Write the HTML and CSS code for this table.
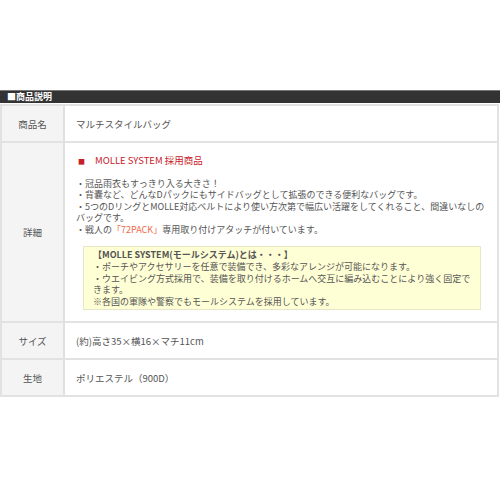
FILE: index.html
```html
<!DOCTYPE html>
<html>

<head>
	<meta charset="utf-8">
	<title>商品説明</title>
	<link rel="stylesheet" href="styles.css">
</head>

<body>
	<div id="item_spec">
		<h2 class="spec_title">■商品説明</h2>

		<table class="spec_table">
			<tr class="row_short">
				<th>商品名</th>
				<td>マルチスタイルバッグ</td>
			</tr>
			<tr>
				<th>詳細</th>
				<td class="detail">
					<p class="point"><span class="mark">■</span>MOLLE SYSTEM 採用商品</p>
					<p class="bullets">
						・冠品雨衣もすっきり入る大きさ！<br>
						・背嚢など、どんなDパックにもサイドバッグとして拡張のできる便利なバッグです。<br>
						・5つのDリングとMOLLE対応ベルトにより使い方次第で幅広い活躍をしてくれること、間違いなしのバッグです。<br>
						・戦人の<span class="accent">「72PACK」</span>専用取り付けアタッチが付いています。
					</p>
					<div class="note">
						<p class="note_title">【MOLLE SYSTEM(モールシステム)とは・・・】</p>
						<p>
							・ポーチやアクセサリーを任意で装備でき、多彩なアレンジが可能になります。<br>
							・ウエイビング方式採用で、装備を取り付けるホームへ交互に編み込むことにより強く固定できます。<br>
							※各国の軍隊や警察でもモールシステムを採用しています。
						</p>
					</div>
				</td>
			</tr>
			<tr class="row_short">
				<th>サイズ</th>
				<td>(約)高さ35×横16×マチ11cm</td>
			</tr>
			<tr class="row_short">
				<th>生地</th>
				<td>ポリエステル（900D）</td>
			</tr>
		</table>
	</div>
</body>

</html>
```

FILE: styles.css
```css
body {
	margin: 0;
	background-color: #FFFFFF;
	color: #555555;
	font-family: "Noto Sans CJK JP", "Liberation Sans", sans-serif;
	font-size: 9px;
}

p {
	margin: 0;
}

#item_spec {
	padding-top: 90px;
}

.spec_title {
	margin: 0;
	height: 12px;
	padding-left: 7px;
	background-color: #333333;
	border-top: 1px solid #777777;
	color: #FFFFFF;
	font-size: 9px;
	font-weight: bold;
	line-height: 12px;
}

.spec_table {
	width: 499px;
	margin-top: 1px;
	border-collapse: collapse;
	border: 2px solid #E2E2E2;
}

.spec_table th,
.spec_table td {
	border-top: 2px solid #E2E2E2;
	border-bottom: 2px solid #E2E2E2;
	vertical-align: middle;
}

.spec_table th {
	width: 61px;
	padding: 0;
	background-color: #F4F4F4;
	border-right: 2px solid #E0E0E0;
	font-weight: normal;
	font-size: 9.5px;
	text-align: center;
}

.spec_table td {
	padding: 0 10px 0 11px;
	font-size: 9.5px;
}

.row_short {
	height: 37px;
}

.spec_table td.detail {
	padding-top: 12px;
	padding-bottom: 11px;
	font-size: 9px;
	line-height: 11.5px;
}

.point {
	color: #C8202A;
	font-size: 9.5px;
	margin-left: 2px;
	margin-bottom: 10px;
}

.mark {
	font-size: 7px;
	margin-right: 10px;
}

.accent {
	color: #EF6A4A;
}

.note {
	margin: 11px 6px 0 7px;
	width: 380px;
	padding: 2px 7px 2px 9px;
	background-color: #FFFFD6;
	border: 1px solid #E6E6C8;
	line-height: 11.5px;
}

.note_title {
	font-weight: bold;
	margin-bottom: 1px;
	line-height: 11px;
}
```
